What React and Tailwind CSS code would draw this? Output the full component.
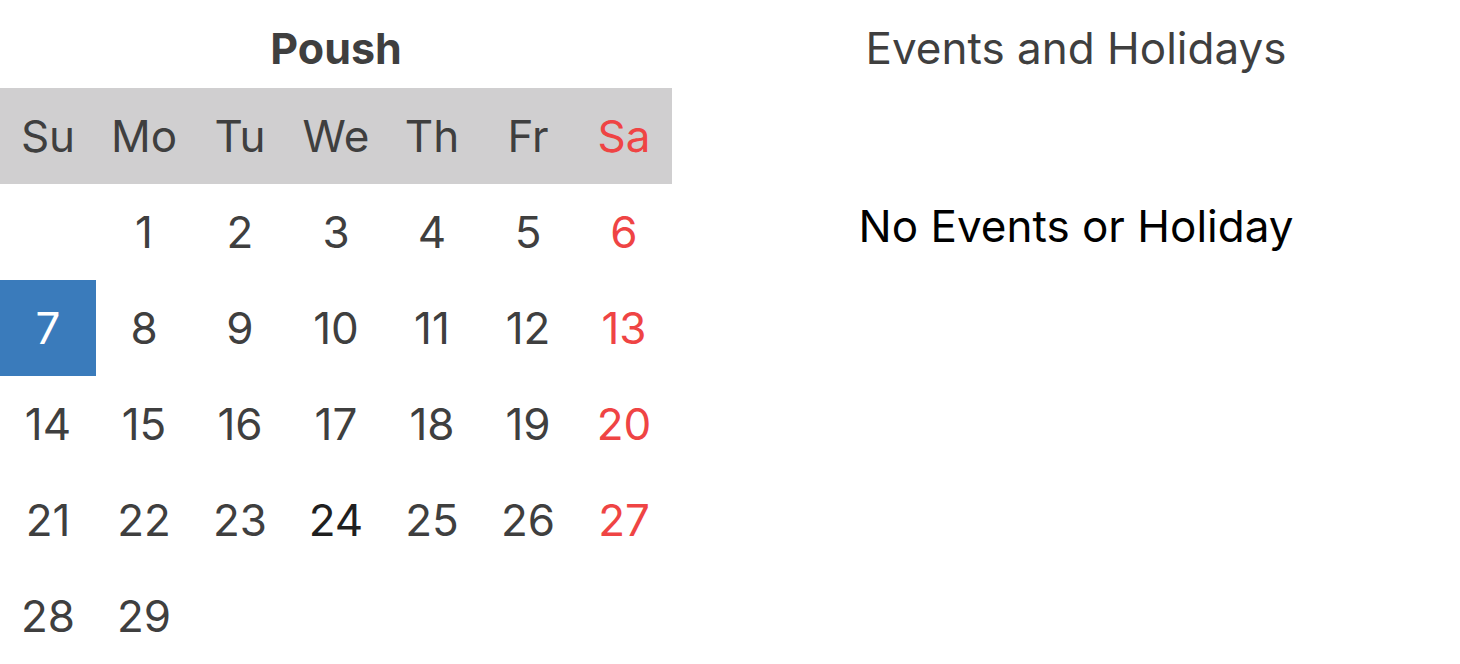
export default function App() {
  const weekdays = ["Su", "Mo", "Tu", "We", "Th", "Fr", "Sa"];
  const days = [null, 1, 2, 3, 4, 5, 6, 7, 8, 9, 10, 11, 12, 13, 14, 15, 16, 17, 18, 19, 20, 21, 22, 23, 24, 25, 26, 27, 28, 29, null, null, null, null, null];
  return (
    <div className="flex w-[1460px] h-[664px] bg-white overflow-hidden" style={{ fontFamily: "Inter, 'Noto Sans', sans-serif" }}>
      <div className="w-[672px] shrink-0 flex flex-col">
        <div className="h-[88px] pt-[9px] flex items-center justify-center text-[43px] font-bold text-[#3f3f3f]">Poush</div>
        <div className="grid grid-cols-7 bg-[#d0cfd0]">
          {weekdays.map((d, i) => (
            <div key={d} className={`h-[96px] flex items-center justify-center text-[44px] ${i === 6 ? "text-[#ef4444]" : "text-[#3f3f3f]"}`}>{d}</div>
          ))}
        </div>
        <div className="grid grid-cols-7">
          {days.map((d, i) => {
            const col = i % 7;
            const selected = d === 7;
            let cls = "text-[#3f3f3f]";
            if (col === 6) cls = "text-[#ef4444]";
            if (d === 24) cls = "text-[#1f1f1f]";
            if (selected) cls = "text-white bg-[#3a7bbb]";
            return (
              <div key={i} className={`h-[96px] flex items-center justify-center text-[44px] ${cls}`}>{d}</div>
            );
          })}
        </div>
      </div>
      <div className="flex-1 flex flex-col items-center pl-[20px]">
        <div className="h-[96px] flex items-center text-[44px] text-[#3f3f3f]">Events and Holidays</div>
        <div className="mt-[97px] text-[44px] leading-[66px] text-black">No Events or Holiday</div>
      </div>
    </div>
  );
}
